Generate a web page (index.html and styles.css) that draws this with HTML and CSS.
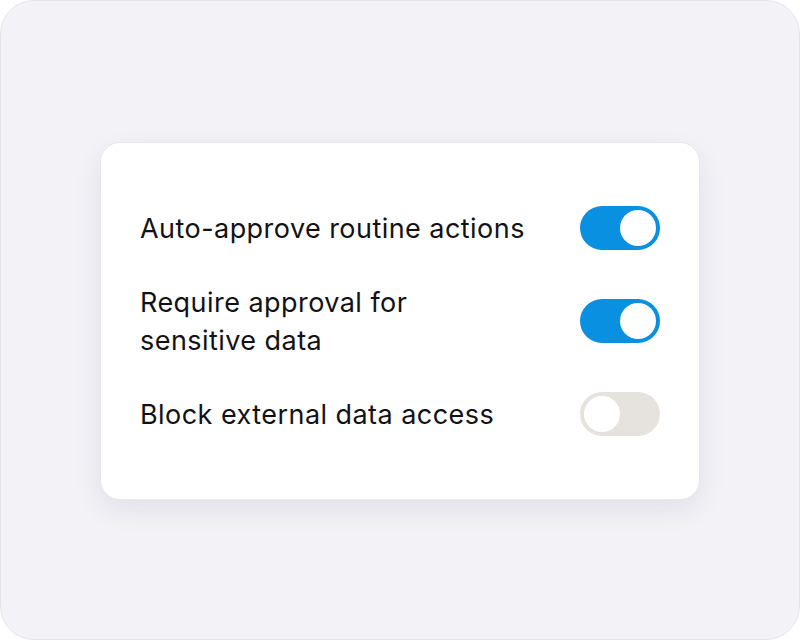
FILE: index.html
```html
<!DOCTYPE html>
<html lang="en">
<head>
<meta charset="utf-8">
<title>Approval settings</title>
<link rel="stylesheet" href="styles.css">
</head>
<body>
<div class="frame">
  <div class="card">
    <div class="row">
      <span class="label">Auto-approve routine actions</span>
      <span class="toggle on"><span class="knob"></span></span>
    </div>
    <div class="row">
      <span class="label">Require approval for<br>sensitive data</span>
      <span class="toggle on"><span class="knob"></span></span>
    </div>
    <div class="row">
      <span class="label">Block external data access</span>
      <span class="toggle off"><span class="knob"></span></span>
    </div>
  </div>
</div>
</body>
</html>
```

FILE: styles.css
```css
html, body {
  margin: 0;
  padding: 0;
  background: #ffffff;
}
.frame {
  box-sizing: border-box;
  width: 800px;
  height: 640px;
  background: #f3f2f7;
  border: 1px solid #e4e3ea;
  border-radius: 34px;
  display: flex;
  align-items: center;
  justify-content: center;
}
.card {
  box-sizing: border-box;
  width: 600px;
  height: 358px;
  background: #ffffff;
  border: 1px solid #e8e7ec;
  border-radius: 20px;
  box-shadow: 0 10px 28px rgba(30, 30, 60, 0.08);
  padding: 0 39px 0 39px;
  display: flex;
  flex-direction: column;
  justify-content: center;
  gap: 32px;
  margin-top: 2px;
}
.row {
  display: flex;
  align-items: center;
  justify-content: space-between;
}
.label {
  font-family: Inter, "Noto Sans", sans-serif;
  font-size: 27px;
  line-height: 38px;
  color: #121216;
  letter-spacing: 0.45px;
  padding-top: 2px;
}
.toggle {
  box-sizing: border-box;
  width: 80px;
  height: 44px;
  border-radius: 22px;
  padding: 4px;
  display: flex;
  flex: none;
}
.toggle.on {
  background: #0a90e0;
  justify-content: flex-end;
}
.toggle.off {
  background: #e6e3df;
  justify-content: flex-start;
}
.knob {
  width: 36px;
  height: 36px;
  border-radius: 50%;
  background: #ffffff;
}
```
